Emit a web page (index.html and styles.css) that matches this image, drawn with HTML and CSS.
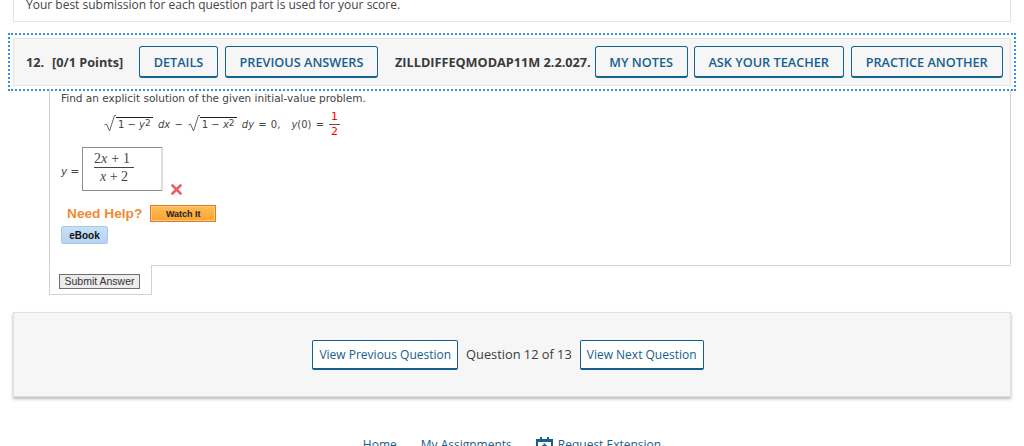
FILE: index.html
```html
<!DOCTYPE html>
<html lang="en">
<head>
<meta charset="utf-8">
<title>Question 12</title>
<link rel="stylesheet" href="styles.css">
</head>
<body>
<div class="page">
  <div class="notice"><p class="notice-text">Your best submission for each question part is used for your score.</p></div>

  <section class="question">
    <div class="focus">
      <header class="qbar">
        <span class="qnum">12.</span>
        <span class="qpts">[0/1 Points]</span>
        <a class="btn btn-details">DETAILS</a>
        <a class="btn btn-prev">PREVIOUS ANSWERS</a>
        <span class="qcode">ZILLDIFFEQMODAP11M 2.2.027.</span>
        <a class="btn btn-notes">MY NOTES</a>
        <a class="btn btn-ask">ASK YOUR TEACHER</a>
        <a class="btn btn-practice">PRACTICE ANOTHER</a>
      </header>
    </div>

    <div class="qbody">
      <p class="prompt">Find an explicit solution of the given initial-value problem.</p>
      <div class="equation">
        <svg class="radical" width="12" height="17" viewBox="0 0 12 17"><path d="M0.5 10 L2.5 9 L5.5 16 L10.5 0.5 L12 0.5" fill="none" stroke="#666" stroke-width="1"/></svg>
        <span class="radicand">1 &minus; <i>y</i><sup>2</sup></span>
        <span class="eq-text"><i>dx</i> &minus;</span>
        <svg class="radical" width="12" height="17" viewBox="0 0 12 17"><path d="M0.5 10 L2.5 9 L5.5 16 L10.5 0.5 L12 0.5" fill="none" stroke="#666" stroke-width="1"/></svg>
        <span class="radicand">1 &minus; <i>x</i><sup>2</sup></span>
        <span class="eq-text"><i>dy</i> = 0,</span>
        <span class="eq-text eq-cond"><i>y</i>(0) =</span>
        <span class="red-frac"><span class="red-num">1</span><span class="red-den">2</span></span>
      </div>
      <div class="answer-row">
        <span class="answer-label"><i>y</i> =</span>
        <div class="answer-box">
          <span class="ans-frac"><span class="ans-num">2<i>x</i> + 1</span><span class="ans-den"><i>x</i> + 2</span></span>
        </div>
        <svg class="wrong" width="11" height="11" viewBox="0 0 11 11"><path d="M1.5 1.5 L9.5 9.5 M9.5 1.5 L1.5 9.5" stroke="#ea5f63" stroke-width="2.6" stroke-linecap="round"/></svg>
      </div>
      <div class="help-row">
        <span class="need-help">Need Help?</span>
        <a class="watch">Watch It</a>
      </div>
      <a class="ebook">eBook</a>
    </div>
    <div class="submit-tab"><button class="submit" type="button">Submit Answer</button></div>
  </section>

  <nav class="pager">
    <a class="pager-btn">View Previous Question</a>
    <span class="pager-count">Question 12 of 13</span>
    <a class="pager-btn">View Next Question</a>
  </nav>

  <footer class="foot">
    <a class="foot-link">Home</a>
    <a class="foot-link">My Assignments</a>
    <span class="foot-ext">
      <svg class="cal" width="17" height="14" viewBox="0 0 17 14"><path d="M1 3 H16 V14 H1 Z" fill="none" stroke="#14608f" stroke-width="2"/><path d="M1 2 H16 V5 H1 Z M4 0 H6 V3 H4 Z M11 0 H13 V3 H11 Z" fill="#14608f"/><path d="M8.5 6.5 V12 M6 9.2 H11" stroke="#14608f" stroke-width="2"/></svg>
      <a class="foot-link">Request Extension</a>
    </span>
  </footer>
</div>
</body>
</html>
```
FILE: styles.css
```css
* { box-sizing: border-box; }
html, body { margin: 0; padding: 0; height: 446px; overflow: hidden; background: #fff; }
body { font-family: "Open Sans", sans-serif; color: #3b3b3b; }
.page { width: 1024px; height: 446px; overflow: hidden; padding: 0 13px; }

.notice { display: flex; height: 22px; border: 1px solid #e4e4e4; border-top: 0; padding-left: 12px; }
.notice-text { margin: -4px 0 0; font-size: 12px; line-height: 17px; color: #444; }

.question { margin-top: 16px; }
.focus { margin: -5px -5px 0; padding: 3px; border: 2px dotted #3a8ee0; height: 58px; }
.qbar { height: 48px; background: #f6f6f6; border: 1px solid #e4e4e4; display: flex; align-items: center; padding-left: 12px; font-size: 12.7px; font-weight: 700; color: #3b3b3b; }
.qnum { width: 26px; }
.qpts { width: 87px; white-space: nowrap; }
.qcode { margin: 0 4px 0 17px; white-space: nowrap; }
.btn { height: 32px; border: 1px solid #12648f; border-bottom-width: 2px; border-radius: 3px; color: #14608f; font-weight: 600; font-size: 12.7px; display: flex; align-items: center; justify-content: center; white-space: nowrap; }
.btn-details { width: 79px; }
.btn-prev { width: 153px; margin-left: 7px; }
.btn-notes { width: 93px; }
.btn-ask { width: 150px; margin-left: 6px; }
.btn-practice { width: 152px; margin-left: 7px; }

.qbody { margin-left: 36px; height: 176px; margin-top: -1px; border: 1px solid #d2d2d2; border-top: 0; padding: 1px 0 0 11px; font-family: "DejaVu Sans", sans-serif; font-size: 10.5px; color: #444; border-radius: 0 0 2px 2px; }
.prompt { margin: 0; font-size: 10.5px; line-height: 14px; }
.equation { display: flex; align-items: center; height: 30px; margin: 4px 0 0 43px; font-size: 10px; }
.radical { flex: none; align-self: flex-start; margin-top: 6px; }
.radicand { border-top: 1px solid #222; padding: 0 0 0 2px; line-height: 14px; margin-right: 5px; white-space: nowrap; min-width: 37px; }
.radicand sup { font-size: 9px; line-height: 0; vertical-align: 2px; }
.eq-text { margin-right: 5px; white-space: nowrap; word-spacing: 1px; }
.eq-cond { margin-left: 6px; }
.red-frac { display: inline-flex; flex-direction: column; align-items: center; color: #f00; font-size: 11px; width: 11px; }
.red-num { border-bottom: 1px solid #555; width: 100%; text-align: center; line-height: 14px; }
.red-den { line-height: 13px; }

.answer-row { display: flex; align-items: center; margin-top: 8px; height: 44px; }
.answer-label { width: 21px; margin-top: 3px; white-space: nowrap; }
.answer-box { width: 81px; height: 44px; border: 1px solid #8c8c8c; border-right: 2px solid #ddd; display: flex; align-items: center; padding-left: 11px; font-family: "Liberation Serif", serif; font-size: 14px; color: #444; }
.ans-frac { display: inline-flex; flex-direction: column; align-items: center; width: 40px; margin-bottom: 3px; }
.ans-num { border-bottom: 1px solid #444; width: 100%; line-height: 16px; white-space: nowrap; word-spacing: 0.5px; }
.ans-den { line-height: 17px; white-space: nowrap; }
.wrong { align-self: flex-end; margin: 0 0 -4px 8px; }

.help-row { display: flex; align-items: center; margin: 14px 0 0 6px; height: 17px; }
.need-help { font-family: "Liberation Sans", sans-serif; font-weight: 700; font-size: 13.7px; color: #ef8a35; margin-right: 8px; white-space: nowrap; }
.watch { width: 66px; height: 17px; background: linear-gradient(#fdbd58, #f9a431); border: 1px solid #e07b24; box-shadow: inset 0 0 0 1px #fdca7d; font-family: "Liberation Sans", sans-serif; font-weight: 700; font-size: 9px; color: #222; display: flex; align-items: center; justify-content: center; }
.ebook { display: flex; width: 47px; height: 18px; margin-top: 4px; background: linear-gradient(#c7e0f8, #b5d3f2); border: 1px solid #a9c8ea; border-radius: 2px; font-family: "Liberation Sans", sans-serif; font-weight: 700; font-size: 10px; color: #111; align-items: center; justify-content: center; }

.submit-tab { margin: -1px 0 0 36px; width: 103px; height: 30px; background: #fff; border: 1px solid #d2d2d2; border-top: 0; position: relative; padding: 9px 0 0 9px; }
.submit { display: block; width: 81px; height: 15px; padding: 0; background: #ececec; border: 1px solid #6e6e6e; border-radius: 0; font-family: "Liberation Sans", sans-serif; font-size: 10.5px; line-height: 13px; color: #333; }

.pager { margin-top: 17px; height: 85px; background: #f6f6f6; border: 1px solid #e0e0e0; box-shadow: 0 2px 3px rgba(0,0,0,0.28); display: flex; align-items: flex-start; justify-content: center; padding: 27px 8px 0 0; }
.pager-btn { height: 30px; padding: 0 6px; background: #fff; border: 1px solid #14608f; border-bottom-width: 2px; border-radius: 2px; font-size: 12px; color: #14608f; display: flex; align-items: center; white-space: nowrap; }
.pager-count { font-size: 12.8px; margin: 6px 8px 0; color: #3b3b3b; white-space: nowrap; line-height: 17px; }

.foot { margin-top: 40px; display: flex; justify-content: center; align-items: flex-start; font-size: 12px; color: #14608f; }
.foot-link { color: #14608f; line-height: 16px; white-space: nowrap; margin-right: 24px; }
.foot-ext { display: flex; align-items: flex-start; }
.cal { margin-right: 5px; flex: none; }
.foot-ext .foot-link { margin-right: 0; }
```
